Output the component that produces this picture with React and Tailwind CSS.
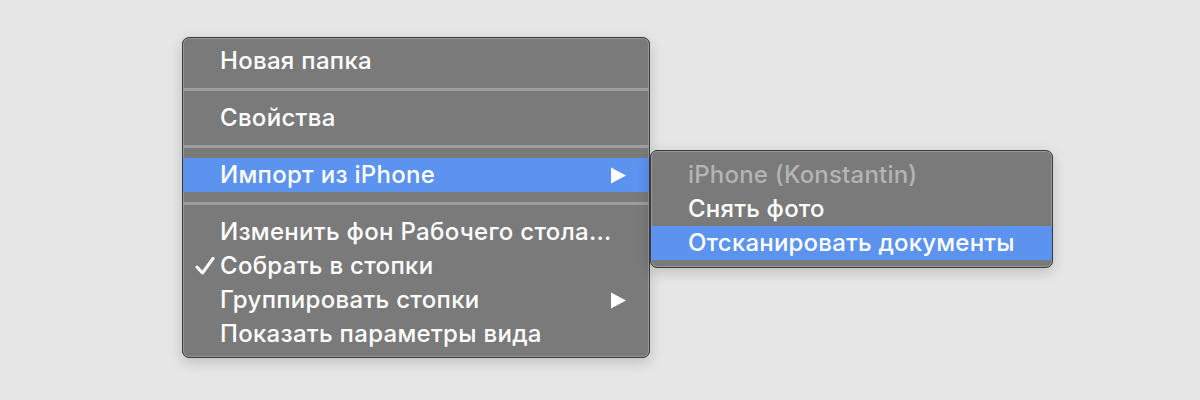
import React from "react";

const Arrow = () => (
  <svg width="17" height="17" viewBox="0 0 17 17" className="shrink-0">
    <path d="M1 0.5 L16 8.5 L1 16.5 Z" fill="#ffffff" />
  </svg>
);

const Check = () => (
  <svg width="20" height="18" viewBox="0 0 20 18">
    <path d="M2 10 L7.5 16 L18 1.5" fill="none" stroke="#ffffff" strokeWidth="3" strokeLinecap="round" strokeLinejoin="round" />
  </svg>
);

const Item = ({ children, active, check, arrow, dim }) => (
  <div
    className={
      "h-[34px] flex items-center pr-[22px] " +
      (active ? "bg-[#5b93ef] " : "")
    }
  >
    <div className="w-[37px] shrink-0 flex justify-end pr-[5px]">
      {check ? <Check /> : null}
    </div>
    <div className={"flex-1 whitespace-nowrap " + (dim ? "text-[#b4b4b4]" : "text-white")}>{children}</div>
    {arrow ? <Arrow /> : null}
  </div>
);

const Sep = () => (
  <div className="h-[23px] flex items-center">
    <div className="h-[3px] w-full bg-[#9d9d9d]" />
  </div>
);

export default function App() {
  return (
    <div
      className="w-[1200px] h-[400px] bg-[#e6e6e6] flex items-start pl-[182px] pt-[37px] overflow-hidden"
      style={{ fontFamily: "Inter, 'Noto Sans', sans-serif" }}
    >
      <div className="w-[468px] shrink-0 rounded-[7px] border border-[#3c3c3c] bg-[#7a7a7a] py-[6px] text-[24px] font-medium tracking-[0.3px] shadow-[0_4px_14px_rgba(0,0,0,0.18)] ring-1 ring-inset ring-[#969696]">
        <Item>Новая папка</Item>
        <Sep />
        <Item>Свойства</Item>
        <Sep />
        <Item active arrow>Импорт из iPhone</Item>
        <Sep />
        <Item>Изменить фон Рабочего стола...</Item>
        <Item check>Собрать в стопки</Item>
        <Item arrow>Группировать стопки</Item>
        <Item>Показать параметры вида</Item>
      </div>
      <div className="w-[403px] shrink-0 mt-[113px] rounded-[7px] border border-[#3c3c3c] bg-[#7a7a7a] py-[7px] text-[24px] font-medium tracking-[0.2px] shadow-[0_4px_14px_rgba(0,0,0,0.18)] ring-1 ring-inset ring-[#969696]">
        <Item dim>iPhone (Konstantin)</Item>
        <Item>Снять фото</Item>
        <Item active>Отсканировать документы</Item>
      </div>
    </div>
  );
}
